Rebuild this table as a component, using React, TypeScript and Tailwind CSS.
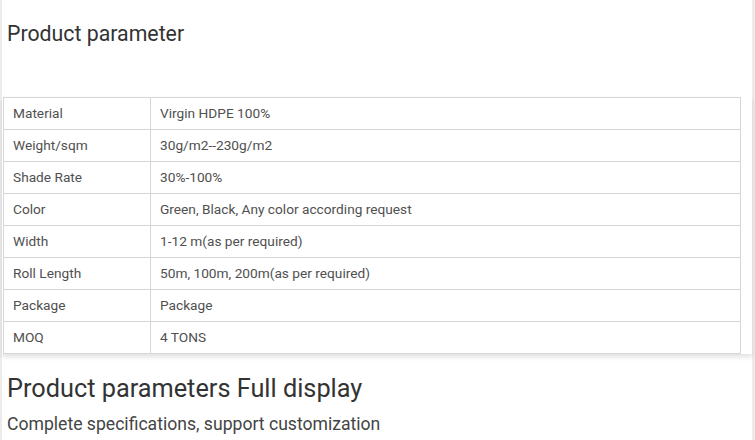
const rows: [string, string][] = [
  ["Material", "Virgin HDPE 100%"],
  ["Weight/sqm", "30g/m2--230g/m2"],
  ["Shade Rate", "30%-100%"],
  ["Color", "Green, Black, Any color according request"],
  ["Width", "1-12 m(as per required)"],
  ["Roll Length", "50m, 100m, 200m(as per required)"],
  ["Package", "Package"],
  ["MOQ", "4 TONS"],
];

export default function App() {
  return (
    <div className="h-[440px] w-[755px] overflow-hidden bg-white font-['Roboto',sans-serif]">
      <div className="h-full border-l-2 border-r-[3px] border-[#ececec]">
        <h2 className="pl-[5px] pt-[20px] text-[21.3px] leading-[28px] text-[#333]">Product parameter</h2>

        <div className="mt-[49px] pl-px pr-[10px] shadow-[0_3px_5px_rgba(0,0,0,0.12)]">
          <table className="w-[738px] border-collapse text-[13.7px] text-[#505050]">
            <tbody>
              {rows.map(([k, v]) => (
                <tr key={k} className="h-[32px]">
                  <td className="w-[147px] border border-[#d6d6d6] pl-[9px] align-middle">{k}</td>
                  <td className="border border-[#d6d6d6] pl-[9px] align-middle">{v}</td>
                </tr>
              ))}
            </tbody>
          </table>
        </div>

        <h3 className="mt-[19px] pl-[5px] text-[25.3px] leading-[32px] text-[#333]">Product parameters Full display</h3>
        <p className="mt-[7px] pl-[5px] text-[17.6px] leading-[24px] text-[#444]">
          Complete specifications, support customization
        </p>
      </div>
    </div>
  );
}
